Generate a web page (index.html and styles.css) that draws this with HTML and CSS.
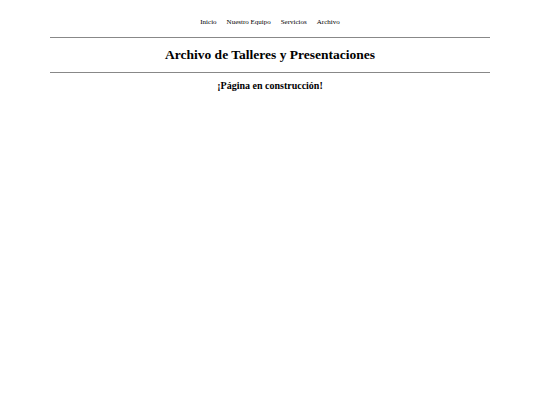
FILE: index.html
```html
<!DOCTYPE html>
<html lang="es">
<head>
<meta charset="utf-8">
<title>Archivo</title>
<link rel="stylesheet" href="styles.css">
</head>
<body>
<div class="page">
  <nav class="nav">
    <a href="#">Inicio</a>
    <a href="#">Nuestro Equipo</a>
    <a href="#">Servicios</a>
    <a href="#">Archivo</a>
  </nav>
  <hr class="rule">
  <h1 class="title">Archivo de Talleres y Presentaciones</h1>
  <hr class="rule">
  <h2 class="sub">¡Página en construcción!</h2>
</div>
</body>
</html>
```
FILE: styles.css
```css
html, body { margin: 0; padding: 0; background: #fff; }
body { font-family: "Liberation Serif", "Times New Roman", serif; color: #000; }
.page { padding: 17px 50px 0; }
.nav { display: flex; justify-content: center; gap: 10px; font-size: 7px; line-height: 10px; }
.nav a { color: #000; text-decoration: none; }
.rule { border: 0; border-top: 1px solid #888; margin: 10px 0 0; height: 0; }
.title { font-size: 13.5px; text-align: center; margin: 9px 0 8px; line-height: 15px; }
.sub { font-size: 10px; text-align: center; margin: 7px 0 0; line-height: 12px; }
```
